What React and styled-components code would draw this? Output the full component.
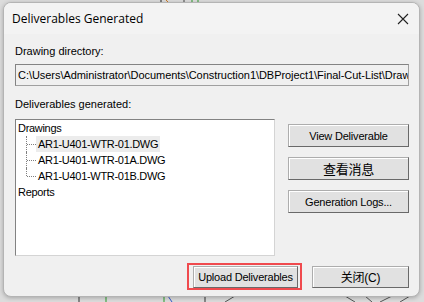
import React from "react";
import styled, { createGlobalStyle } from "styled-components";

const GlobalStyle = createGlobalStyle`
  html, body {
    margin: 0;
    padding: 0;
    background: #dcdcdc;
    width: 424px;
    height: 302px;
    overflow: hidden;
  }
`;

const Desktop = styled.div`
  position: relative;
  width: 424px;
  height: 302px;
  padding: 2px 4px 0 3px;
  box-sizing: border-box;
`;

const Backdrop = styled.svg`
  position: absolute;
  left: 0;
  top: 0;
`;

const Window = styled.div`
  position: relative;
  display: flex;
  flex-direction: column;
  width: 417px;
  height: 295px;
  box-sizing: border-box;
  border: 1px solid #b4b4b4;
  border-radius: 8px;
  background: #f0f0f0;
  box-shadow: 0 1px 4px rgba(0, 0, 0, 0.25);
  overflow: hidden;
  font-family: Tahoma, "Liberation Sans", "Noto Sans CJK SC", sans-serif;
  font-size: 11px;
  color: #000;
`;

const TitleBar = styled.div`
  display: flex;
  align-items: center;
  justify-content: space-between;
  height: 31px;
  padding: 0 10px 0 8px;
  background: #f3f3f3;
  font-family: "Open Sans", "Noto Sans", sans-serif;
  font-size: 12px;
`;

const CloseIcon = styled.svg`
  display: block;
`;

const Body = styled.div`
  display: flex;
  flex-direction: column;
  padding: 10px 10px 0 11px;
`;

const Label = styled.div`
  height: 14px;
  line-height: 14px;
  margin-bottom: ${(p) => p.$gap}px;
`;

const PathBox = styled.div`
  height: 22px;
  box-sizing: border-box;
  border: 1px solid #a0a0a0;
  border-top-color: #838383;
  border-left-color: #838383;
  background: #f0f0f0;
  line-height: 20px;
  padding-left: 2px;
  letter-spacing: -0.05px;
  white-space: nowrap;
  overflow: hidden;
  margin-bottom: 11px;
`;

const Main = styled.div`
  display: flex;
  gap: 13px;
`;

const TreeBox = styled.div`
  width: 261px;
  height: 137px;
  box-sizing: border-box;
  border: 1px solid #828282;
  border-right-color: #d4d4d4;
  border-bottom-color: #d4d4d4;
  background: #fff;
`;

const Node = styled.div`
  display: flex;
  align-items: center;
  height: 16px;
  line-height: 16px;
`;

const Branch = styled.span`
  display: inline-block;
  position: relative;
  width: 16px;
  height: 16px;
  margin-left: 4px;
  &::before {
    content: "";
    position: absolute;
    left: 6px;
    top: 0;
    height: ${(p) => (p.$last ? "8px" : "16px")};
    border-left: 1px dotted #808080;
  }
  &::after {
    content: "";
    position: absolute;
    left: 7px;
    top: 8px;
    width: 9px;
    border-top: 1px dotted #808080;
  }
`;

const NodeText = styled.span`
  padding: 0 2px;
  letter-spacing: -0.3px;
  background: ${(p) => (p.$selected ? "#ececec" : "transparent")};
`;

const SideButtons = styled.div`
  display: flex;
  flex-direction: column;
  gap: 10px;
  padding-top: 5px;
`;

const Button = styled.button`
  width: ${(p) => p.$w || 121}px;
  height: ${(p) => p.$h || 23}px;
  box-sizing: border-box;
  margin: 0;
  padding: 0;
  border: 1px solid #adadad;
  border-right-color: #696969;
  border-bottom-color: #696969;
  background: #e1e1e1;
  box-shadow: inset 1px 1px 0 #fff;
  font-family: Tahoma, "Liberation Sans", "Noto Sans CJK SC", sans-serif;
  font-size: ${(p) => p.$fs || 11}px;
  letter-spacing: -0.2px;
  color: #000;
`;

const Footer = styled.div`
  display: flex;
  justify-content: flex-end;
  align-items: center;
  gap: 10px;
  padding-top: 7px;
`;

const Highlight = styled.div`
  padding: 1px 2px 0 4px;
  border: 2px solid #f04a4e;
`;

export default function App() {
  return (
    <>
      <GlobalStyle />
      <Desktop>
        <Backdrop width="424" height="302">
          <line x1="161" y1="0" x2="161" y2="4" stroke="#222" />
          <line x1="184" y1="0" x2="184" y2="4" stroke="#444" />
          <line x1="192" y1="0" x2="192" y2="4" stroke="#2a9d2a" />
          <line x1="198" y1="0" x2="198" y2="4" stroke="#2a9d2a" />
          <line x1="166" y1="0" x2="168" y2="2" stroke="#d07a20" />
          <line x1="79" y1="296" x2="79" y2="302" stroke="#333" />
          <line x1="106" y1="296" x2="106" y2="302" stroke="#2a9d2a" />
          <line x1="164" y1="296" x2="164" y2="302" stroke="#2a9d2a" />
          <line x1="168" y1="296" x2="172" y2="302" stroke="#3355cc" />
          <line x1="205" y1="296" x2="205" y2="302" stroke="#333" />
          <line x1="225" y1="302" x2="235" y2="296" stroke="#555" />
          <line x1="345" y1="296" x2="355" y2="302" stroke="#555" />
          <line x1="365" y1="296" x2="372" y2="302" stroke="#555" />
          <line x1="380" y1="302" x2="392" y2="296" stroke="#555" />
          <line x1="400" y1="302" x2="410" y2="296" stroke="#555" />
        </Backdrop>
        <Window>
          <TitleBar>
            <span>Deliverables Generated</span>
            <CloseIcon width="12" height="12" viewBox="0 0 12 12">
              <path d="M1 1 L11 11 M11 1 L1 11" stroke="#222" strokeWidth="1.1" />
            </CloseIcon>
          </TitleBar>
          <Body>
            <Label $gap={6}>Drawing directory:</Label>
            <PathBox>
              C:\Users\Administrator\Documents\Construction1\DBProject1\Final-Cut-List\Drawings
            </PathBox>
            <Label $gap={8}>Deliverables generated:</Label>
            <Main>
              <TreeBox>
                <Node>
                  <NodeText>Drawings</NodeText>
                </Node>
                <Node>
                  <Branch />
                  <NodeText $selected>AR1-U401-WTR-01.DWG</NodeText>
                </Node>
                <Node>
                  <Branch />
                  <NodeText>AR1-U401-WTR-01A.DWG</NodeText>
                </Node>
                <Node>
                  <Branch $last />
                  <NodeText>AR1-U401-WTR-01B.DWG</NodeText>
                </Node>
                <Node>
                  <NodeText>Reports</NodeText>
                </Node>
              </TreeBox>
              <SideButtons>
                <Button>View Deliverable</Button>
                <Button $fs={13}>查看消息</Button>
                <Button>Generation Logs...</Button>
              </SideButtons>
            </Main>
            <Footer>
              <Highlight>
                <Button $w={105} $h={22}>Upload Deliverables</Button>
              </Highlight>
              <Button $w={97} $h={22} $fs={12}>关闭(C)</Button>
            </Footer>
          </Body>
        </Window>
      </Desktop>
    </>
  );
}
